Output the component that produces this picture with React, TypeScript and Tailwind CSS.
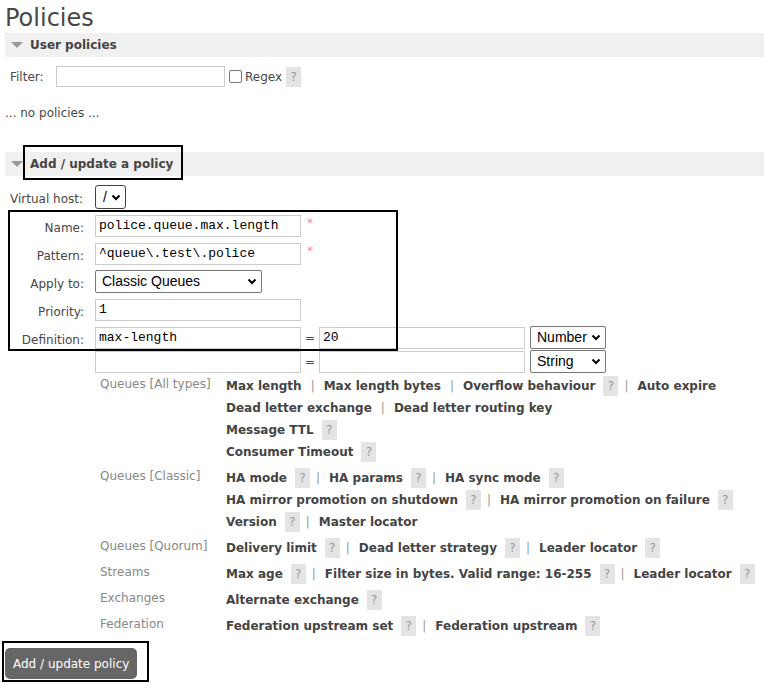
import React from "react";

const Help = ({ cls = "" }: { cls?: string }) => (
  <span className={"inline-flex items-center justify-center w-[15px] h-[20px] bg-[#e4e4e4] text-[#999] font-normal text-[12px] " + cls}>?</span>
);

const Sep = () => <span className="mx-[9px] text-[#999] font-normal">|</span>;

type Item = { t: string; h?: boolean };

const HelpLine = ({ items }: { items: Item[] }) => (
  <div className="flex items-center h-[22px] font-bold text-[#444] whitespace-nowrap">
    {items.map((it, i) => (
      <React.Fragment key={i}>
        {i > 0 && (items[i - 1].h ? <span className="ml-[6px] mr-[9px] text-[#999] font-normal">|</span> : <Sep />)}
        <span>{it.t}</span>
        {it.h && <Help cls="ml-[8px]" />}
      </React.Fragment>
    ))}
  </div>
);

const HelpGroup = ({ label, lines }: { label: string; lines: Item[][] }) => (
  <div className="flex mb-[4px]">
    <div className="w-[131px] pl-[5px] text-[#888] h-[22px] leading-[22px] -mt-[2px]">{label}</div>
    <div>
      {lines.map((l, i) => (
        <HelpLine key={i} items={l} />
      ))}
    </div>
  </div>
);

const Bar = ({ title }: { title: string }) => (
  <div className="ml-[5px] h-[24px] bg-[#f0f0f0] flex items-center">
    <svg width="12" height="8" viewBox="0 0 12 8" className="ml-[6px] mr-[7px]">
      <polygon points="0,1 12,1 6,7" fill="#999" />
    </svg>
    <span className="font-bold text-[12px] text-[#444]">{title}</span>
  </div>
);

const Label = ({ children }: { children: React.ReactNode }) => (
  <div className="w-[95px] pr-[11px] pt-[4px] text-right text-[12px]">{children}</div>
);

const TextInput = ({ value, w = "w-[206px]" }: { value: string; w?: string }) => (
  <div className={w + " h-[22px] border border-[#ccc] bg-white flex items-center px-[3px] font-['Liberation_Mono',monospace] text-[13px] text-black"}>
    {value}
  </div>
);

const Select = ({ value, w }: { value: string; w: string }) => (
  <div className={w + " h-[23px] border border-[#767676] rounded-[2px] bg-white flex items-center justify-between pl-[6px] pr-[4px] font-['Liberation_Sans',Arial,sans-serif] text-[14px] text-black"}>
    <span>{value}</span>
    <svg width="10" height="7" viewBox="0 0 10 7">
      <polyline points="1.5,1.5 5,5 8.5,1.5" fill="none" stroke="#000" strokeWidth="2" />
    </svg>
  </div>
);

export default function App() {
  return (
    <div className="relative w-[764px] h-[685px] overflow-hidden bg-white font-['DejaVu_Sans',Verdana,sans-serif] text-[12px] text-[#484848]">
      <h1 className="pl-[5px] pt-[3px] text-[24px] leading-[30px] text-[#484848] font-normal">Policies</h1>
      <Bar title="User policies" />
      <div className="flex items-center mt-[9px] h-[21px]">
        <span className="ml-[10px] w-[46px]">Filter:</span>
        <div className="w-[169px] h-[21px] border border-[#ccc]" />
        <span className="ml-[4px] w-[13px] h-[13px] border border-[#767676] rounded-[2px]" />
        <span className="ml-[3px]">Regex</span>
        <Help cls="ml-[4px]" />
      </div>
      <div className="ml-[5px] mt-[17px]">... no policies ...</div>
      <div className="mt-[30px]">
        <Bar title="Add / update a policy" />
      </div>
      <div className="mt-[9px] flex items-center h-[24px]">
        <div className="w-[95px] pl-[10px] pt-[4px]">Virtual host:</div>
        <div className="w-[31px] h-[24px] border border-[#444] rounded-[3px] flex items-center pl-[7px] gap-[4px] font-['Liberation_Sans',Arial,sans-serif] text-[14px] text-black">
          <span>/</span>
          <svg width="10" height="7" viewBox="0 0 10 7">
            <polyline points="1.5,1.5 5,5 8.5,1.5" fill="none" stroke="#000" strokeWidth="2" />
          </svg>
        </div>
      </div>
      <div className="mt-[5px] flex flex-col gap-[5px]">
        <div className="flex items-center h-[23px]">
          <Label>Name:</Label>
          <TextInput value="police.queue.max.length" />
          <span className="ml-[6px] mt-[3px] self-start text-[#f88] text-[12px] leading-[12px]">*</span>
        </div>
        <div className="flex items-center h-[23px]">
          <Label>Pattern:</Label>
          <TextInput value="^queue\.test\.police" />
          <span className="ml-[6px] mt-[3px] self-start text-[#f88] text-[12px] leading-[12px]">*</span>
        </div>
        <div className="flex items-center h-[23px]">
          <Label>Apply to:</Label>
          <Select value="Classic Queues" w="w-[167px]" />
        </div>
        <div className="flex items-center h-[23px]">
          <Label>Priority:</Label>
          <TextInput value="1" />
        </div>
        <div className="flex items-center h-[23px]">
          <Label>Definition:</Label>
          <TextInput value="max-length" />
          <span className="w-[18px] text-center">=</span>
          <TextInput value="20" />
          <div className="ml-[5px]">
            <Select value="Number" w="w-[76px]" />
          </div>
        </div>
        <div className="flex items-center h-[23px] -mt-[4px]">
          <Label>{""}</Label>
          <TextInput value="" />
          <span className="w-[18px] text-center">=</span>
          <TextInput value="" />
          <div className="ml-[5px]">
            <Select value="String" w="w-[76px]" />
          </div>
        </div>
      </div>
      <div className="mt-[2px] ml-[95px]">
        <HelpGroup
          label="Queues [All types]"
          lines={[
            [{ t: "Max length" }, { t: "Max length bytes" }, { t: "Overflow behaviour", h: true }, { t: "Auto expire" }],
            [{ t: "Dead letter exchange" }, { t: "Dead letter routing key" }],
            [{ t: "Message TTL", h: true }],
            [{ t: "Consumer Timeout", h: true }],
          ]}
        />
        <HelpGroup
          label="Queues [Classic]"
          lines={[
            [{ t: "HA mode", h: true }, { t: "HA params", h: true }, { t: "HA sync mode", h: true }],
            [{ t: "HA mirror promotion on shutdown", h: true }, { t: "HA mirror promotion on failure", h: true }],
            [{ t: "Version", h: true }, { t: "Master locator" }],
          ]}
        />
        <HelpGroup
          label="Queues [Quorum]"
          lines={[[{ t: "Delivery limit", h: true }, { t: "Dead letter strategy", h: true }, { t: "Leader locator", h: true }]]}
        />
        <HelpGroup
          label="Streams"
          lines={[[{ t: "Max age", h: true }, { t: "Filter size in bytes. Valid range: 16-255", h: true }, { t: "Leader locator", h: true }]]}
        />
        <HelpGroup label="Exchanges" lines={[[{ t: "Alternate exchange", h: true }]]} />
        <HelpGroup
          label="Federation"
          lines={[[{ t: "Federation upstream set", h: true }, { t: "Federation upstream", h: true }]]}
        />
      </div>
      <div className="mt-[11px] ml-[5px]">
        <button className="h-[31px] px-[8px] bg-[#666] text-white rounded-[5px] text-[12px]">Add / update policy</button>
      </div>

      <div className="absolute left-[23px] top-[145px] w-[160px] h-[35px] border-2 border-black" />
      <div className="absolute left-[8px] top-[210px] w-[390px] h-[141px] border-2 border-black" />
      <div className="absolute left-[2px] top-[641px] w-[147px] h-[41px] border-2 border-black" />
    </div>
  );
}
